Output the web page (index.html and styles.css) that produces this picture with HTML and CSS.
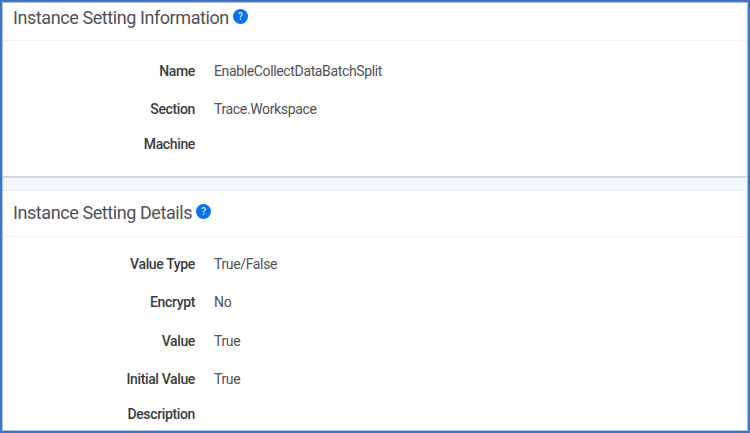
FILE: index.html
```html
<!DOCTYPE html>
<html lang="en">
<head>
<meta charset="utf-8">
<title>Instance Setting</title>
<link rel="stylesheet" href="styles.css">
</head>
<body>
<main class="frame">
  <section class="panel info">
    <header class="head"><h2 class="title">Instance Setting Information</h2><span class="help">?</span></header>
    <dl class="fields">
      <dt>Name</dt><dd>EnableCollectDataBatchSplit</dd>
      <dt>Section</dt><dd>Trace.Workspace</dd>
      <dt>Machine</dt><dd></dd>
    </dl>
  </section>
  <section class="panel details">
    <header class="head"><h2 class="title">Instance Setting Details</h2><span class="help">?</span></header>
    <dl class="fields">
      <dt>Value Type</dt><dd>True/False</dd>
      <dt>Encrypt</dt><dd>No</dd>
      <dt>Value</dt><dd>True</dd>
      <dt>Initial Value</dt><dd>True</dd>
      <dt>Description</dt><dd></dd>
    </dl>
  </section>
</main>
</body>
</html>
```
FILE: styles.css
```css
* { box-sizing: border-box; }
body { margin: 0; font-family: Roboto, sans-serif; color: #505156; }
.frame { width: 750px; height: 433px; border: 2px solid #4472c4; outline: 1px solid #a9c0ea; outline-offset: -3px; background: #f3f7fa; overflow: hidden; display: flex; flex-direction: column; }
.panel { background: #fff; }
.info { height: 176px; border-bottom: 2px solid #d3d7df; }
.details { margin-top: 12px; flex: 1; border-top: 1px solid #e6ecf3; }
.head { display: flex; align-items: center; height: 39px; padding: 0 0 7px 11px; border-bottom: 1px solid #eef2f8; gap: 4px; }
.details .head { height: 46px; padding-bottom: 2px; }
.title { margin: 0; font-size: 18px; font-weight: 400; line-height: 22px; letter-spacing: -0.42px; }
.help { width: 15px; height: 15px; border-radius: 50%; background: #0873e6; color: #d9eaff; font-size: 10px; line-height: 15px; text-align: center; font-weight: 500; margin-bottom: 3px; }
.fields { display: grid; grid-template-columns: 193px 1fr; column-gap: 19px; margin: 0; padding-top: 11px; grid-template-rows: 38px 38px 32px; align-items: center; font-size: 14px; letter-spacing: -0.36px; }
.details .fields { padding-top: 8px; grid-template-rows: 38px 38px 40px 36px 34px; }
dt { text-align: right; font-weight: 500; color: #3a3c42; }
dd { margin: 0; }
```
